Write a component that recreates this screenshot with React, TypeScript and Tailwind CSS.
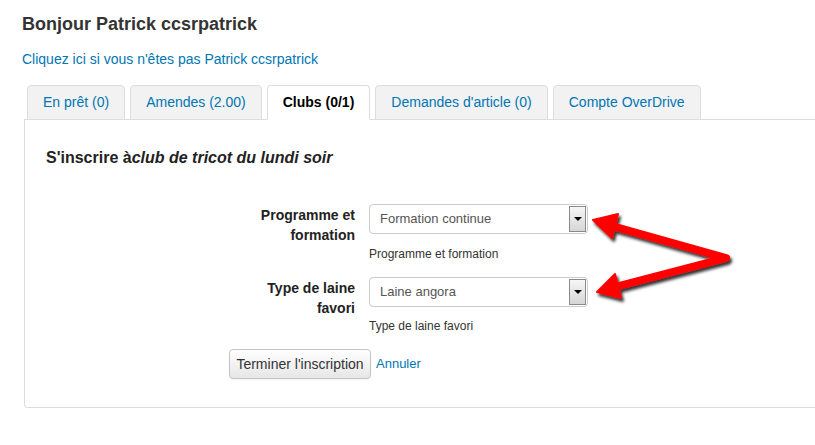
import React from 'react';

const tabs = [
  { name: 'En prêt (0)', active: false },
  { name: 'Amendes (2.00)', active: false },
  { name: 'Clubs (0/1)', active: true },
  { name: "Demandes d'article (0)", active: false },
  { name: 'Compte OverDrive', active: false },
];

function SelectBox({ value }: { value: string }) {
  return (
    <div className="relative flex h-[30px] w-[219px] items-center rounded-[4px] border border-[#cccccc] bg-white pl-[10px] text-[13px] text-[#555555]">
      {value}
      <div className="absolute right-[1px] top-[1px] flex h-[26px] w-[17px] items-center justify-center border border-[#8a8a8a] bg-gradient-to-b from-[#f6f6f6] to-[#d6d6d6]">
        <div className="h-0 w-0 border-x-[4px] border-t-[4px] border-x-transparent border-t-black" />
      </div>
    </div>
  );
}

function Arrows() {
  return (
    <svg className="pointer-events-none absolute left-0 top-0" width="815" height="445">
      <defs>
        <filter id="shadow" x="-20%" y="-20%" width="140%" height="140%">
          <feDropShadow dx="2" dy="3" stdDeviation="1.5" floodColor="#000" floodOpacity="0.8" />
        </filter>
      </defs>
      <g filter="url(#shadow)" fill="#ff0000" stroke="#ff0000">
        <polyline
          points="612,226 726,258 615,287"
          fill="none"
          strokeWidth="8"
          strokeLinejoin="round"
          strokeLinecap="round"
        />
        <polygon points="593,220 618,214 612,238" strokeWidth="2" strokeLinejoin="round" />
        <polygon points="597,292 615,274 621,298" strokeWidth="2" strokeLinejoin="round" />
      </g>
    </svg>
  );
}

export default function App() {
  return (
    <div className="relative h-[445px] w-[815px] overflow-hidden bg-white font-['Liberation_Sans',Arial,sans-serif] text-[#333333]">
      <div className="pl-[22px] pt-[13px]">
        <h1 className="text-[18px] font-bold leading-[22px]">Bonjour Patrick ccsrpatrick</h1>
        <a href="#" className="mt-[14px] block text-[14px] leading-[20px] text-[#0076b2]">
          Cliquez ici si vous n'êtes pas Patrick ccsrpatrick
        </a>
      </div>

      <div className="ml-[24px] mt-[16px] w-[830px]">
        {/* Tabs */}
        <ul className="flex gap-[5px] border-b border-[#dddddd] pl-[3px]">
          {tabs.map(tab => (
            <li
              key={tab.name}
              className={`-mb-px flex h-[35px] items-center rounded-t-[4px] border px-[15px] text-[14px] ${
                tab.active
                  ? 'border-[#dddddd] border-b-white bg-white font-bold text-black'
                  : 'border-[#dddddd] bg-[#f2f2f2] text-[#0076b2]'
              }`}
            >
              {tab.name}
            </li>
          ))}
        </ul>

        {/* Panel */}
        <div className="rounded-b-[4px] border border-t-0 border-[#dddddd] pb-[28px] pl-[21px] pt-[28px]">
          <h2 className="text-[16px] font-bold leading-[20px] text-[#222222]">
            S'inscrire à<i>club de tricot du lundi soir</i>
          </h2>

          <div className="ml-[183px] mt-[36px] flex flex-col">
            <div className="flex gap-[14px]">
              <label className="w-[126px] pt-[1px] text-right text-[14px] font-bold leading-[20px] text-[#222222]">
                Programme et
                <br />
                formation
              </label>
              <div>
                <SelectBox value="Formation continue" />
                <p className="mt-[12px] text-[12px] leading-[16px]">Programme et formation</p>
              </div>
            </div>

            <div className="mt-[15px] flex gap-[14px]">
              <label className="w-[126px] pt-[1px] text-right text-[14px] font-bold leading-[20px] text-[#222222]">
                Type de laine
                <br />
                favori
              </label>
              <div>
                <SelectBox value="Laine angora" />
                <p className="mt-[11px] text-[12px] leading-[16px]">Type de laine favori</p>
              </div>
            </div>

            <div className="mt-[15px] flex items-center gap-[5px]">
              <button className="h-[30px] w-[142px] rounded-[4px] border border-[#c4c4c4] bg-gradient-to-b from-[#ffffff] to-[#e6e6e6] text-[14px] text-[#333333] shadow-[inset_0_1px_0_rgba(255,255,255,0.2),0_1px_2px_rgba(0,0,0,0.05)]">
                Terminer l'inscription
              </button>
              <a href="#" className="text-[13px] text-[#0076b2]">
                Annuler
              </a>
            </div>
          </div>
        </div>
      </div>

      <Arrows />
    </div>
  );
}
